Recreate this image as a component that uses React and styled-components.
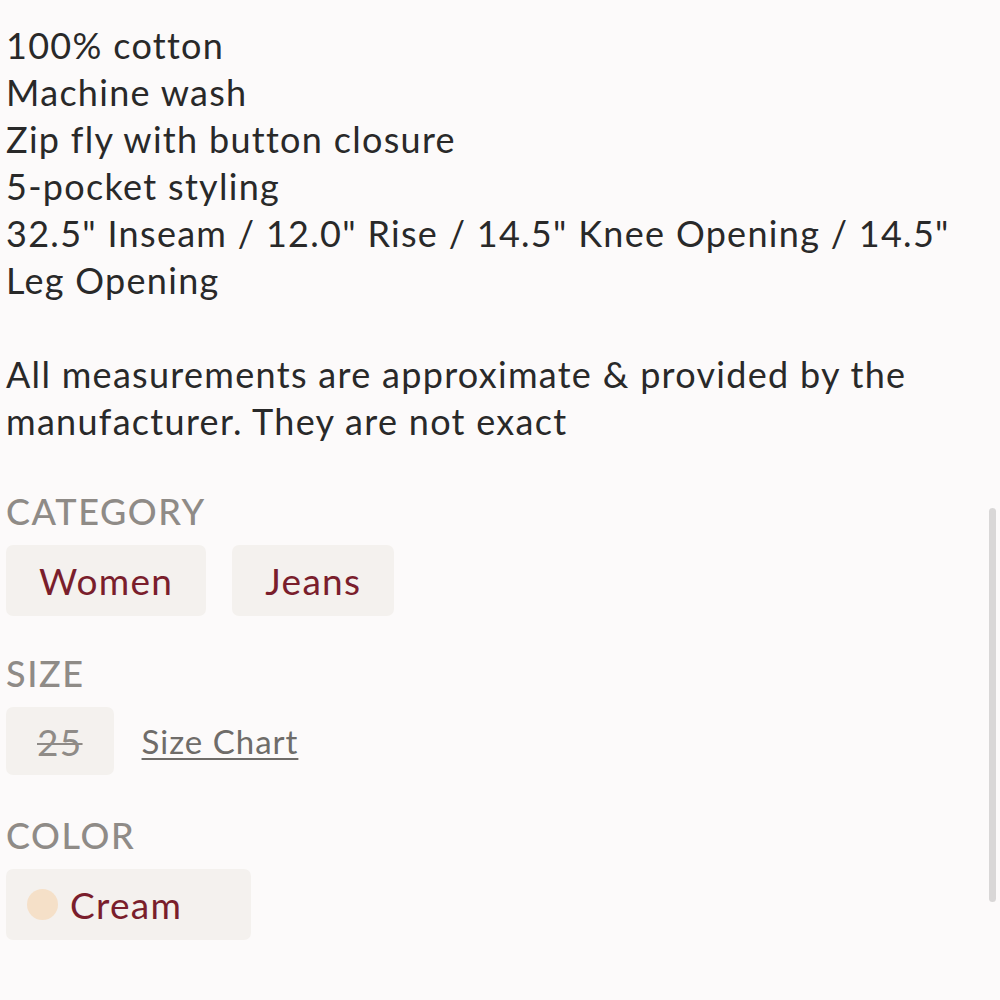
import React from 'react';
import styled, { createGlobalStyle } from 'styled-components';

const GlobalStyle = createGlobalStyle`
  html, body {
    margin: 0;
    padding: 0;
    background: #fcfafa;
  }
  body {
    font-family: Lato, "Noto Sans", sans-serif;
    color: #292929;
  }
`;

const Page = styled.div`
  position: relative;
  min-height: 1000px;
  padding: 22px 0 0 6px;
  box-sizing: border-box;
`;

const Description = styled.div`
  font-size: 36px;
  line-height: 47px;
  letter-spacing: 1.3px;
  padding-right: 50px;
`;

const Paragraph = styled.p`
  margin: 0 0 47px;
`;

const Section = styled.section`
  margin-top: ${p => p.$top ?? 35}px;
`;

const Label = styled.h3`
  margin: 0 0 12px;
  font-size: 36px;
  line-height: 44px;
  font-weight: 500;
  letter-spacing: 1.6px;
  color: #8f8b87;
  text-transform: uppercase;
`;

const Row = styled.div`
  display: flex;
  align-items: center;
  gap: ${p => p.$gap || 26}px;
`;

const Chip = styled.div`
  display: flex;
  align-items: center;
  gap: 12px;
  height: ${p => p.$h || 71}px;
  padding: 0 ${p => p.$px || 33}px 0 ${p => p.$pl || p.$px || 33}px;
  background: #f4f1ee;
  border-radius: 7px;
  font-size: 37px;
  letter-spacing: 1.3px;
  color: ${p => (p.$muted ? '#8f8b87' : '#7a1e2c')};
  text-decoration: ${p => (p.$muted ? 'line-through' : 'none')};
  text-decoration-thickness: 2px;
`;

const Swatch = styled.span`
  width: 31px;
  height: 31px;
  border-radius: 50%;
  background: ${p => p.$color};
`;

const ChartLink = styled.a`
  font-size: 33px;
  letter-spacing: 1px;
  color: #6f6c69;
  text-decoration: underline;
  text-underline-offset: 4px;
  text-decoration-thickness: 2px;
`;

const Scrollbar = styled.div`
  position: absolute;
  right: 4px;
  top: 508px;
  width: 7px;
  height: 394px;
  border-radius: 4px;
  background: #d9d7d7;
`;

export default function App() {
  const details = [
    '100% cotton',
    'Machine wash',
    'Zip fly with button closure',
    '5-pocket styling',
    '32.5" Inseam / 12.0" Rise / 14.5" Knee Opening / 14.5" Leg Opening',
  ];

  return (
    <Page>
      <GlobalStyle />
      <Description>
        <Paragraph>
          {details.map((d, i) => (
            <React.Fragment key={i}>
              {d}
              {i < details.length - 1 && <br />}
            </React.Fragment>
          ))}
        </Paragraph>
        <Paragraph>
          All measurements are approximate &amp; provided by the manufacturer. They are not exact
        </Paragraph>
      </Description>

      <Section $top={-3}>
        <Label>Category</Label>
        <Row>
          <Chip>Women</Chip>
          <Chip>Jeans</Chip>
        </Row>
      </Section>

      <Section>
        <Label>Size</Label>
        <Row $gap={28}>
          <Chip $muted $h={68} $px={31}>25</Chip>
          <ChartLink href="#">Size Chart</ChartLink>
        </Row>
      </Section>

      <Section $top={38}>
        <Label>Color</Label>
        <Row>
          <Chip $pl={21} $px={69}>
            <Swatch $color="#f5e0c8" />
            Cream
          </Chip>
        </Row>
      </Section>

      <Scrollbar />
    </Page>
  );
}
